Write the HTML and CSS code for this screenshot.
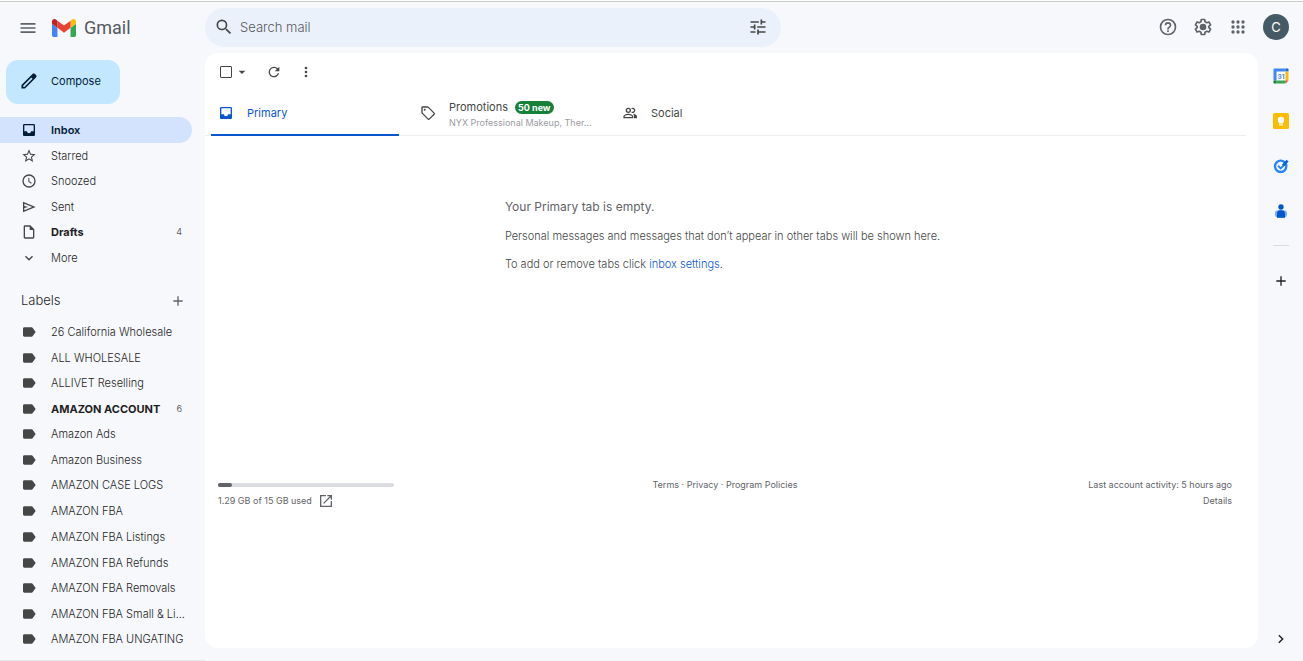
FILE: index.html
```
<!DOCTYPE html>
<html lang="en">
<head>
  <meta charset="UTF-8">
  <meta name="viewport" content="width=device-width, initial-scale=1.0">
  <title>Inbox - Gmail</title>
  <link rel="stylesheet" href="styles.css">
</head>
<body>

  <!-- Shared icon shapes -->
  <svg class="sprite" aria-hidden="true">
    <symbol id="i-inbox" viewBox="0 0 24 24"><path d="M19 3H5c-1.100 0-2 .9-2 2v14c0 1.100.9 2 2 2h14c1.100 0 2-.9 2-2V5c0-1.100-.9-2-2-2zm0 11h-4c0 1.660-1.340 3-3 3s-3-1.340-3-3H5V5h14v9z"/></symbol>
    <symbol id="i-label" viewBox="0 0 24 24"><path d="M17.630 5.840C17.270 5.330 16.670 5 16 5L5 5c-1.100 0-2 .9-2 2v10c0 1.100.9 2 2 2h11c.670 0 1.270-.330 1.630-.840L22 12z"/></symbol>
    <symbol id="i-plus" viewBox="0 0 24 24"><path d="M19 13h-6v6h-2v-6H5v-2h6V5h2v6h6z"/></symbol>
  </svg>

  <header class="header">
    <div class="brand">
      <button class="icon-btn" aria-label="Main menu">
        <svg class="icon-20" viewBox="0 0 24 24"><path d="M3 18h18v-2H3zm0-5h18v-2H3zm0-7v2h18V6z"/></svg>
      </button>
      <a class="logo" href="#">
        <svg viewBox="52 42 88 66" width="24" height="18" aria-hidden="true">
          <path fill="#4285f4" d="M58 108h14V74L52 59v43c0 3.320 2.690 6 6 6"/>
          <path fill="#34a853" d="M120 108h14c3.320 0 6-2.690 6-6V59l-20 15"/>
          <path fill="#fbbc04" d="M120 48v26l20-15v-8c0-7.420-8.470-11.650-14.400-7.200"/>
          <path fill="#ea4335" d="M72 74V48l24 18 24-18v26L96 92"/>
          <path fill="#c5221f" d="M52 51v8l20 15V48l-5.600-4.200c-5.940-4.450-14.400-.22-14.400 7.200"/>
        </svg>
        <span>Gmail</span>
      </a>
    </div>

    <form class="search">
      <button class="icon-btn" type="button" aria-label="Search">
        <svg class="icon-20" viewBox="0 0 24 24"><path d="M15.500 14h-.790l-.280-.270A6.470 6.470 0 0 0 16 9.500 6.500 6.500 0 1 0 9.500 16c1.610 0 3.090-.590 4.230-1.570l.270.280v.790l5 4.990L20.490 19zm-6 0a4.500 4.500 0 1 1 0-9 4.500 4.500 0 0 1 0 9z"/></svg>
      </button>
      <input type="text" placeholder="Search mail" aria-label="Search mail">
      <button class="icon-btn" type="button" aria-label="Show search options">
        <svg class="icon-20" viewBox="0 0 24 24"><path d="M3 17v2h6v-2zM3 5v2h10V5zm10 16v-2h8v-2h-8v-2h-2v6zM7 9v2H3v2h4v2h2V9zm14 4v-2H11v2zm-6-4h2V7h4V5h-4V3h-2z"/></svg>
      </button>
    </form>

    <div class="account">
      <button class="icon-btn" aria-label="Support">
        <svg class="icon-20" viewBox="0 0 24 24"><path d="M11 18h2v-2h-2zm1-16a10 10 0 1 0 0 20 10 10 0 0 0 0-20zm0 18a8 8 0 1 1 0-16 8 8 0 0 1 0 16zm0-14a4 4 0 0 0-4 4h2c0-1.100.9-2 2-2s2 .9 2 2c0 2-3 1.750-3 5h2c0-2.250 3-2.500 3-5a4 4 0 0 0-4-4z"/></svg>
      </button>
      <button class="icon-btn" aria-label="Settings">
        <svg class="icon-20" viewBox="0 0 24 24"><path fill="none" stroke="currentColor" stroke-width="2" stroke-linejoin="round" d="M10 3h4l.5 2.700 2 1.150 2.600-.9 2 3.450-2.100 1.800v1.600l2.100 1.800-2 3.450-2.600-.9-2 1.150L14 21h-4l-.5-2.700-2-1.150-2.600.9-2-3.450L5 12.800v-1.600L2.900 9.400l2-3.450 2.600.9 2-1.150z"/><circle cx="12" cy="12" r="4"/></svg>
      </button>
      <button class="icon-btn" aria-label="Google apps">
        <svg class="icon-20" viewBox="0 0 24 24"><circle cx="6" cy="6" r="2"/><circle cx="12" cy="6" r="2"/><circle cx="18" cy="6" r="2"/><circle cx="6" cy="12" r="2"/><circle cx="12" cy="12" r="2"/><circle cx="18" cy="12" r="2"/><circle cx="6" cy="18" r="2"/><circle cx="12" cy="18" r="2"/><circle cx="18" cy="18" r="2"/></svg>
      </button>
      <button class="avatar" aria-label="Google Account">C</button>
    </div>
  </header>

  <div class="layout">
    <nav class="sidebar">
      <button class="compose">
        <svg class="icon-20" viewBox="0 0 24 24"><path d="M20.410 4.940l-1.350-1.350c-.780-.780-2.050-.780-2.830 0L3 16.820V21h4.180L20.410 7.770c.790-.780.790-2.050 0-2.830zm-14 14.120L5 19v-1.360l9.820-9.820 1.410 1.410z"/></svg>
        Compose
      </button>

      <ul class="nav-list">
        <li><a class="active" href="#"><svg class="icon-16"><use href="#i-inbox"/></svg><span>Inbox</span></a></li>
        <li><a href="#"><svg class="icon-16" viewBox="0 0 24 24"><path d="M22 9.240l-7.190-.620L12 2 9.190 8.630 2 9.240l5.460 4.730L5.820 21 12 17.270 18.180 21l-1.630-7.030zM12 15.400l-3.760 2.270 1-4.280-3.320-2.880 4.380-.380L12 6.100l1.710 4.040 4.380.380-3.320 2.880 1 4.280z"/></svg><span>Starred</span></a></li>
        <li><a href="#"><svg class="icon-16" viewBox="0 0 24 24"><path d="M12 2a10 10 0 1 0 0 20 10 10 0 0 0 0-20zm0 18a8 8 0 1 1 0-16 8 8 0 0 1 0 16zm.5-13H11v6l4.200 3.200.9-1.400-3.600-2.600z"/></svg><span>Snoozed</span></a></li>
        <li><a href="#"><svg class="icon-16" viewBox="0 0 24 24"><path d="M3 4v16l19-8zm2 3l11.850 5L5 17v-3.500l6-1.500-6-1.500z"/></svg><span>Sent</span></a></li>
        <li><a class="unread" href="#"><svg class="icon-16" viewBox="0 0 24 24"><path d="M14 2H6c-1.100 0-2 .9-2 2v16c0 1.100.9 2 2 2h12c1.100 0 2-.9 2-2V8zM6 20V4h7v5h5v11z"/></svg><span>Drafts</span><small>4</small></a></li>
        <li><a href="#"><svg class="icon-16" viewBox="0 0 24 24"><path d="M16.590 8.590L12 13.170 7.410 8.590 6 10l6 6 6-6z"/></svg><span>More</span></a></li>
      </ul>

      <div class="labels-head">
        <h2>Labels</h2>
        <button class="icon-btn" aria-label="Create new label"><svg class="icon-16"><use href="#i-plus"/></svg></button>
      </div>

      <ul class="nav-list">
        <li><a href="#"><svg class="icon-16"><use href="#i-label"/></svg><span>26 California Wholesale</span></a></li>
        <li><a href="#"><svg class="icon-16"><use href="#i-label"/></svg><span>ALL WHOLESALE</span></a></li>
        <li><a href="#"><svg class="icon-16"><use href="#i-label"/></svg><span>ALLIVET Reselling</span></a></li>
        <li><a class="unread" href="#"><svg class="icon-16"><use href="#i-label"/></svg><span>AMAZON ACCOUNT</span><small>6</small></a></li>
        <li><a href="#"><svg class="icon-16"><use href="#i-label"/></svg><span>Amazon Ads</span></a></li>
        <li><a href="#"><svg class="icon-16"><use href="#i-label"/></svg><span>Amazon Business</span></a></li>
        <li><a href="#"><svg class="icon-16"><use href="#i-label"/></svg><span>AMAZON CASE LOGS</span></a></li>
        <li><a href="#"><svg class="icon-16"><use href="#i-label"/></svg><span>AMAZON FBA</span></a></li>
        <li><a href="#"><svg class="icon-16"><use href="#i-label"/></svg><span>AMAZON FBA Listings</span></a></li>
        <li><a href="#"><svg class="icon-16"><use href="#i-label"/></svg><span>AMAZON FBA Refunds</span></a></li>
        <li><a href="#"><svg class="icon-16"><use href="#i-label"/></svg><span>AMAZON FBA Removals</span></a></li>
        <li><a href="#"><svg class="icon-16"><use href="#i-label"/></svg><span>AMAZON FBA Small &amp; Li...</span></a></li>
        <li><a href="#"><svg class="icon-16"><use href="#i-label"/></svg><span>AMAZON FBA UNGATING</span></a></li>
        <li><a href="#"><svg class="icon-16"><use href="#i-label"/></svg><span>AMAZON Seller</span></a></li>
      </ul>
    </nav>

    <main class="mail">
      <div class="toolbar">
        <input class="select-all" type="checkbox" aria-label="Select all">
        <button class="icon-btn" aria-label="Select options"><svg class="icon-16" viewBox="0 0 24 24"><path d="M7 10l5 5 5-5z"/></svg></button>
        <button class="icon-btn" aria-label="Refresh"><svg class="icon-16" viewBox="0 0 24 24"><path d="M17.650 6.350A8 8 0 1 0 19.730 14h-2.080A6 6 0 1 1 12 6c1.660 0 3.140.690 4.220 1.780L13 11h7V4z"/></svg></button>
        <button class="icon-btn" aria-label="More options"><svg class="icon-16" viewBox="0 0 24 24"><circle cx="12" cy="6" r="2"/><circle cx="12" cy="12" r="2"/><circle cx="12" cy="18" r="2"/></svg></button>
      </div>

      <div class="tabs" role="tablist">
        <button class="tab selected" role="tab" aria-selected="true">
          <svg class="icon-16"><use href="#i-inbox"/></svg>
          <span class="tab-name">Primary</span>
        </button>
        <button class="tab" role="tab">
          <svg class="icon-16" viewBox="0 0 24 24"><path fill="none" stroke="currentColor" stroke-width="2" stroke-linejoin="round" d="M3 3.800c0-.5.300-.8.800-.8h7.400c.5 0 1 .2 1.400.6l8.200 8.200c.7.700.7 1.700 0 2.400l-6.600 6.600c-.7.700-1.700.7-2.400 0l-8.200-8.200c-.4-.4-.6-.9-.6-1.400z"/><circle cx="7" cy="7" r="1.500"/></svg>
          <span class="tab-text">
            <span class="tab-name">Promotions <b class="badge">50 new</b></span>
            <span class="tab-senders">NYX Professional Makeup, Ther...</span>
          </span>
        </button>
        <button class="tab" role="tab">
          <svg class="icon-16" viewBox="0 0 24 24"><path fill="none" stroke="currentColor" stroke-width="2" d="M3 19v-1.500c0-2 3.500-3.500 6.500-3.500s6.500 1.500 6.500 3.500V19zM14.500 5.400a3 3 0 1 1 0 5.200"/><circle cx="9.500" cy="8" r="3" fill="none" stroke="currentColor" stroke-width="2"/><path d="M16.700 13.200c3 .5 5.800 2 5.800 4.300V20H18v-2.500c0-1.800-.5-3.200-1.300-4.300z"/></svg>
          <span class="tab-name">Social</span>
        </button>
      </div>

      <section class="empty">
        <h1>Your Primary tab is empty.</h1>
        <p>Personal messages and messages that don’t appear in other tabs will be shown here.</p>
        <p>To add or remove tabs click <a href="#">inbox settings</a>.</p>
      </section>

      <footer class="footer">
        <div class="storage">
          <div class="meter"><div class="meter-fill"></div></div>
          <a href="#">1.29 GB of 15 GB used
            <svg class="icon-16" viewBox="0 0 24 24"><path d="M19 19H5V5h7V3H3v18h18v-9h-2zM14 3v2h3.590l-9.830 9.830 1.410 1.410L19 6.410V10h2V3z"/></svg>
          </a>
        </div>
        <div class="legal"><a href="#">Terms</a> · <a href="#">Privacy</a> · <a href="#">Program Policies</a></div>
        <div class="activity">Last account activity: 5 hours ago<br><a href="#">Details</a></div>
      </footer>
    </main>

    <aside class="rail">
      <button class="icon-btn" aria-label="Calendar">
        <svg class="icon-16" viewBox="0 0 32 32"><path fill="#fff" d="M7 7h18v18H7z"/><path fill="#4285f4" d="M3 1h22v6H7v18H1V3c0-1 1-2 2-2z"/><path fill="#1967d2" d="M25 1h4c1 0 2 1 2 2v4h-6z"/><path fill="#fbbc04" d="M25 7h6v18h-6z"/><path fill="#34a853" d="M7 25h18v6H7z"/><path fill="#188038" d="M1 25h6v6H3c-1 0-2-1-2-2z"/><path fill="#ea4335" d="M25 25h6l-6 6z"/><text x="16" y="21" text-anchor="middle">31</text></svg>
      </button>
      <button class="icon-btn" aria-label="Keep">
        <svg class="icon-16" viewBox="0 0 16 16"><rect width="16" height="16" rx="1.500" fill="#fbbc04"/><circle cx="8" cy="7" r="3.200" fill="#fff"/><path fill="#fff" d="M6 9h4v1.500H6zm0 2.200h4v1.300H6z"/></svg>
      </button>
      <button class="icon-btn" aria-label="Tasks">
        <svg class="icon-16" viewBox="0 0 24 24"><circle cx="11.500" cy="12.500" r="8.500" fill="none" stroke="#2684fc" stroke-width="3.500"/><path fill="none" stroke="#2684fc" stroke-width="3" d="M7.500 11.500l4 4 6-6"/><path fill="none" stroke="#0066da" stroke-width="4" d="M15 11l7-7"/></svg>
      </button>
      <button class="icon-btn" aria-label="Contacts">
        <svg class="icon-16" viewBox="0 0 24 24"><circle cx="12" cy="6" r="4" fill="#0057cc"/><rect x="3" y="11" width="18" height="11" rx="5" fill="#7baaf7"/><path fill="#0057cc" d="M6 22v-6c0-3 2-5 5-5h2c3 0 5 2 5 5v6z"/></svg>
      </button>
      <hr>
      <button class="icon-btn dark" aria-label="Get add-ons"><svg class="icon-16"><use href="#i-plus"/></svg></button>
      <button class="icon-btn dark collapse" aria-label="Hide side panel"><svg class="icon-16" viewBox="0 0 24 24"><path d="M9.500 5.500L8 7l5 5-5 5 1.500 1.500L16 12z"/></svg></button>
    </aside>
  </div>

</body>
</html>
```
FILE: styles.css
```
* {
  box-sizing: border-box;
}

body {
  margin: 0;
  height: 100vh;
  display: flex;
  flex-direction: column;
  overflow: hidden;
  border-top: 1px solid #fff;
  background-color: #f6f8fc;
  color: #444746;
  font-family: Inter, Roboto, sans-serif;
  font-size: 11px;
  line-height: 16px;
}

a {
  color: inherit;
  text-decoration: none;
}

button {
  padding: 0;
  border: 0;
  background: none;
  color: inherit;
  font: inherit;
  cursor: pointer;
}

svg {
  display: block;
  flex: none;
  fill: currentColor;
}

ul {
  list-style: none;
  margin: 0;
  padding: 0;
}

.sprite {
  position: absolute;
  width: 0;
  height: 0;
}

.icon-16 {
  width: 16px;
  height: 16px;
}

.icon-20 {
  width: 20px;
  height: 20px;
}

.icon-btn {
  display: flex;
  align-items: center;
  justify-content: center;
  color: #5f6368;
}

/* Header */
.header {
  display: flex;
  align-items: center;
  height: 52px;
  flex: none;
  border-top: 1px solid #c8cdc8;
  padding-right: 14px;
}

.brand {
  display: flex;
  align-items: center;
  width: 205px;
  gap: 14px;
  padding-left: 18px;
  flex: none;
}

.logo {
  display: flex;
  align-items: center;
  gap: 8px;
  color: #55585c;
  font-family: Roboto, sans-serif;
  font-size: 18px;
  line-height: 24px;
}

.search {
  display: flex;
  align-items: center;
  flex: 0 1 576px;
  height: 39px;
  padding: 0 13px 2px 9px;
  border-radius: 20px;
  background-color: #eaf1fb;
}

.search .icon-btn {
  color: #444746;
}

.search input {
  flex: 1;
  min-width: 0;
  padding: 0 6px;
  border: 0;
  outline: 0;
  background: none;
  color: #444746;
  font: inherit;
  font-size: 13px;
  font-weight: 300;
}

.search input::placeholder {
  color: #55585c;
  opacity: 1;
}

.account {
  display: flex;
  align-items: center;
  gap: 15px;
  margin-left: auto;
  padding-bottom: 2px;
}

.avatar {
  width: 26px;
  height: 26px;
  border-radius: 50%;
  background-color: #455a64;
  color: #fff;
  font-size: 13px;
}

.layout {
  display: flex;
  flex: 1;
  min-height: 0;
}

/* Sidebar */
.sidebar {
  width: 205px;
  flex: none;
  overflow: hidden;
  padding-top: 7px;
  border-bottom: 1px solid #e3e5e8;
}

.compose {
  display: flex;
  align-items: center;
  gap: 12px;
  height: 44px;
  margin: 0 0 13px 6px;
  padding: 0 19px 2px 13px;
  border-radius: 12px;
  background-color: #c2e7ff;
  color: #001d35;
}

.nav-list {
  width: 192px;
  font-weight: 300;
}

.nav-list li {
  height: 26px;
}

.nav-list li:nth-child(even) {
  height: 25px;
}

.nav-list li:nth-child(8n) {
  height: 26px;
}

.nav-list a {
  display: flex;
  align-items: center;
  gap: 14px;
  height: 100%;
  padding: 0 10px 0 21px;
  border-radius: 0 13px 13px 0;
  white-space: nowrap;
}

.nav-list span {
  color: #1f1f1f;
}

.nav-list small {
  margin-left: auto;
  font-size: 9px;
  font-weight: 400;
  color: #5f6368;
}

.nav-list .active {
  background-color: #d3e3fd;
  color: #001d35;
  font-weight: 600;
}

.nav-list .active span {
  color: #001d35;
}

.nav-list .unread span {
  font-weight: 700;
}

.labels-head {
  display: flex;
  align-items: center;
  justify-content: space-between;
  width: 192px;
  margin: 18px 0 6px;
  padding: 0 6px 0 21px;
}

.labels-head h2 {
  margin: 0;
  color: #1f1f1f;
  font-size: 13px;
  font-weight: 300;
  line-height: 25px;
}

/* Mail area */
.mail {
  flex: 1;
  min-width: 0;
  margin-bottom: 13px;
  border-radius: 13px;
  background-color: #fff;
}

.toolbar {
  display: flex;
  align-items: center;
  gap: 16px;
  height: 39px;
  padding: 0 0 2px 15px;
}

.select-all {
  appearance: none;
  width: 12px;
  height: 12px;
  margin: 0 -14px 0 0;
  border: 1px solid #444746;
  border-radius: 1px;
}

.toolbar .icon-btn {
  color: #444746;
}

.tabs {
  display: flex;
  gap: 14px;
  height: 44px;
  margin-right: 12px;
  padding-left: 6px;
  border-bottom: 1px solid #eceef0;
}

.tab {
  display: flex;
  align-items: center;
  gap: 13px;
  width: 188px;
  height: 44px;
  padding: 0 0 0 7px;
  border-bottom: 2px solid transparent;
  text-align: left;
  white-space: nowrap;
}

.tab.selected {
  border-bottom-color: #0b57d0;
  color: #0b57d0;
}

.tab-text {
  padding-top: 3px;
}

.tab-name {
  display: block;
}

.tab-senders {
  display: block;
  color: #9a9c9f;
  font-size: 9px;
}

.badge {
  display: inline-block;
  margin-left: 4px;
  padding: 0 3px;
  border-radius: 7px;
  background-color: #188038;
  color: #fff;
  font-size: 9px;
  line-height: 13px;
}

.empty {
  width: fit-content;
  margin: 61px auto 0;
  padding-right: 18px;
  color: #444746;
  font-weight: 300;
}

.empty h1 {
  margin: 0 0 11px;
  color: #5f6368;
  font-size: 12px;
  font-weight: 400;
  line-height: 20px;
}

.empty p {
  margin: 0 0 12px;
}

.empty a {
  color: #0b57d0;
}

.footer {
  display: grid;
  grid-template-columns: 1fr auto 1fr;
  margin-top: 205px;
  padding: 0 26px 0 13px;
  color: #5f6368;
  font-size: 9px;
}

.meter {
  width: 176px;
  height: 4px;
  margin: 6px 0;
  border-radius: 2px;
  background-color: #dadce0;
}

.meter-fill {
  width: 8%;
  height: 100%;
  border-radius: 2px;
  background-color: #5f6368;
}

.storage a {
  display: flex;
  gap: 6px;
}

.activity {
  text-align: right;
}

/* Right rail */
.rail {
  display: flex;
  flex-direction: column;
  align-items: center;
  gap: 29px;
  width: 45px;
  flex: none;
  padding: 15px 0 14px;
}

.rail text {
  fill: #4285f4;
  font-size: 13px;
  font-weight: 700;
}

.rail hr {
  width: 16px;
  margin: -3px 0 -2px;
  border: 0;
  border-top: 1px solid #dadce0;
}

.rail .dark {
  color: #1f1f1f;
}

.rail .collapse {
  margin-top: auto;
}
```
